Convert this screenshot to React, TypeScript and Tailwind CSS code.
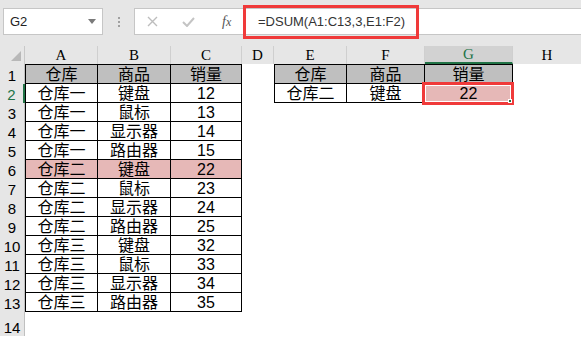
import React from 'react';

const colWidths = [73, 73, 71, 32, 73, 78, 88];
const colNames = ['A', 'B', 'C', 'D', 'E', 'F', 'G'];

const left = [
  ['仓库', '商品', '销量'],
  ['仓库一', '键盘', '12'],
  ['仓库一', '鼠标', '13'],
  ['仓库一', '显示器', '14'],
  ['仓库一', '路由器', '15'],
  ['仓库二', '键盘', '22'],
  ['仓库二', '鼠标', '23'],
  ['仓库二', '显示器', '24'],
  ['仓库二', '路由器', '25'],
  ['仓库三', '键盘', '32'],
  ['仓库三', '鼠标', '33'],
  ['仓库三', '显示器', '34'],
  ['仓库三', '路由器', '35'],
];

const right = [
  ['仓库', '商品', '销量'],
  ['仓库二', '键盘', '22'],
];

const cellFont = { fontFamily: '"Liberation Sans", "Noto Sans CJK SC", sans-serif' };

function Cell({ w, text, bg, bl, bt, table, sel }: { w: number; text?: string; bg?: string; bl?: boolean; bt?: boolean; table?: boolean; sel?: boolean }) {
  let cls = 'relative box-border flex items-center justify-center text-[16px] leading-[16px] text-black shrink-0 ';
  if (table) cls += 'border-black border-r border-b ';
  if (bl) cls += 'border-l ';
  if (bt) cls += 'border-t ';
  return (
    <div className={cls} style={{ width: w, background: bg }}>
      {text && <span className="block h-[16px] leading-[16px] translate-y-[1px]">{text}</span>}
      {sel && (
        <div className="absolute -left-[3px] -right-[2px] -top-[2px] -bottom-[3px] border-[3px] border-[#f03a3a]">
          <div className="h-full w-full border border-white" />
          <div className="absolute -bottom-[1px] -right-[1px] h-[4px] w-[4px] bg-[#217346] border border-white" />
        </div>
      )}
    </div>
  );
}

function Row({ n, h, children }: { n: number; h: number; children: React.ReactNode }) {
  const active = n === 2;
  return (
    <div className="flex" style={{ height: h }}>
      <div
        className={`box-border w-[25px] shrink-0 flex items-end justify-center pb-[1px] text-[15px] leading-[15px] bg-[#e6e6e6] ${
          active ? 'border-r-2 border-[#217346] text-[#217346]' : 'border-r border-[#c0c0c0] text-black'
        }`}
      >
        {n}
      </div>
      {children}
    </div>
  );
}

export default function App() {
  return (
    <div className="w-[581px] h-[337px] overflow-hidden bg-white select-none" style={cellFont}>
      {/* formula bar */}
      <div className="h-[46px] bg-[#e6e6e6] flex items-start pt-[8px]">
        <div className="ml-[3px] w-[100px] h-[27px] bg-white border border-[#c6c6c6] flex items-center justify-between pl-[6px] pr-[6px]">
          <span className="text-[13px] text-[#222]">G2</span>
          <svg width="8" height="5" viewBox="0 0 8 5"><path d="M0 0h8L4 5z" fill="#7a7a7a" /></svg>
        </div>
        <div className="w-[31px] h-[27px] flex flex-col items-center justify-center gap-[2px]">
          <span className="w-[2px] h-[2px] bg-[#a0a0a0]" />
          <span className="w-[2px] h-[2px] bg-[#a0a0a0]" />
          <span className="w-[2px] h-[2px] bg-[#a0a0a0]" />
        </div>
        <div className="relative flex-1 h-[27px] bg-white border border-[#c6c6c6] border-r-0 flex items-center">
          <div className="w-[108px] flex items-center">
            <svg className="ml-[12px]" width="11" height="11" viewBox="0 0 11 11">
              <path d="M1 1l9 9M10 1l-9 9" stroke="#bdbdbd" strokeWidth="1.4" />
            </svg>
            <svg className="ml-[24px]" width="13" height="10" viewBox="0 0 13 10">
              <path d="M1 5l4 4 7-8" stroke="#c4c4c4" strokeWidth="2" fill="none" />
            </svg>
            <span className="ml-[27px] text-[14px] italic text-[#555]" style={{ fontFamily: '"Liberation Serif", serif' }}>
              f<span className="text-[12px]">x</span>
            </span>
          </div>
          <span className="ml-[15px] text-[13px] text-[#333]">
            =DSUM(A1:C13,3,E1:F2)
          </span>
          <div className="absolute left-[108px] -top-[4px] w-[176px] h-[34px] border-[3px] border-[#f03a3a]" />
        </div>
      </div>

      {/* column headers */}
      <div className="flex h-[18px] bg-[#e6e6e6]">
        <div className="box-border w-[25px] shrink-0 border-r border-[#c8c8c8] flex items-end justify-end pr-[3px] pb-[3px]">
          <svg width="10" height="10" viewBox="0 0 10 10"><path d="M10 0v10H0z" fill="#b8b8b8" /></svg>
        </div>
        {colNames.map((c, i) => (
          <div
            key={c}
            className={`box-border shrink-0 flex items-center justify-center text-[15px] leading-[15px] border-r border-[#cfcfcf] ${
              c === 'G' ? 'bg-[#d2d2d2] text-[#217346] border-b-2 border-b-[#217346]' : 'text-black'
            }`}
            style={{ width: colWidths[i], fontFamily: '"Liberation Serif", serif' }}
          >
            {c}
          </div>
        ))}
        <div className="flex-1 flex items-center justify-center text-[15px] leading-[15px]" style={{ fontFamily: '"Liberation Serif", serif' }}>H</div>
      </div>

      {/* rows */}
      {left.map((r, ri) => {
        const n = ri + 1;
        const hdr = ri === 0;
        const pink = n === 6;
        const rr = right[ri];
        return (
          <Row key={n} n={n} h={hdr ? 20 : 19}>
            {r.map((t, ci) => (
              <Cell
                key={ci}
                w={colWidths[ci]}
                text={t}
                table
                bl={ci === 0}
                bt={hdr}
                bg={hdr ? '#bfbfbf' : pink ? '#e6b8b7' : undefined}
              />
            ))}
            <Cell w={colWidths[3]} />
            {rr ? (
              rr.map((t, ci) => (
                <Cell
                  key={'r' + ci}
                  w={colWidths[4 + ci]}
                  text={t}
                  table
                  bl={ci === 0}
                  bt={hdr}
                  bg={hdr ? '#bfbfbf' : ci === 2 ? '#e6b8b7' : undefined}
                  sel={!hdr && ci === 2}
                />
              ))
            ) : (
              <div className="shrink-0" style={{ width: 73 + 78 + 88 }} />
            )}
          </Row>
        );
      })}
      <Row n={14} h={24}>
        <div />
      </Row>
    </div>
  );
}
